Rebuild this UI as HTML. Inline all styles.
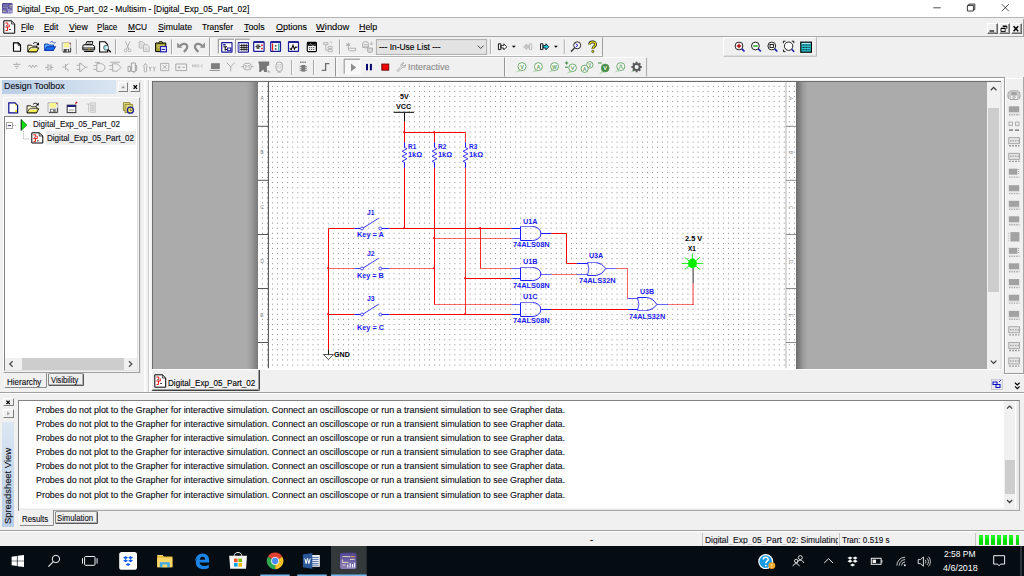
<!DOCTYPE html><html><head><meta charset="utf-8"><title>Multisim</title><style>
*{box-sizing:border-box;margin:0;padding:0}
html,body{width:1024px;height:576px;overflow:hidden;background:#f0f0f0;font-family:"Liberation Sans",sans-serif;}
#root{position:relative;width:1024px;height:576px;overflow:hidden;background:#f0f0f0;font-size:9.6px;color:#000}
.abs{position:absolute}
.t{position:absolute;white-space:nowrap;line-height:1;transform-origin:0 0;-webkit-text-stroke:0.12px currentColor}
.s{position:absolute;white-space:nowrap;line-height:1;transform-origin:0 0}
u{text-decoration:underline;text-underline-offset:1px;text-decoration-thickness:0.6px}
svg{position:absolute;overflow:visible}
</style></head><body><div id="root">
<div class="abs" style="left:0px;top:0px;width:1024px;height:17px;background:#fff;"></div>
<svg style="left:2.2px;top:2.8px;" width="11" height="11" viewBox="0 0 11 11"><defs><linearGradient id="apg" x1="0" y1="0" x2="0.3" y2="1"><stop offset="0" stop-color="#453f8c"/><stop offset="1" stop-color="#7a72b4"/></linearGradient></defs><rect x="0" y="0" width="10.600" height="10.600" rx="1.300" fill="url(#apg)"/><path d="M1 2h5.400M1 4.200h4.400v2.200h2.600M6 8.200h3.600" stroke="#9d97cc" stroke-width=".9" fill="none"/><path d="M7.600 2.400h2.400M7.600 4h2M0.800 8.200h3" stroke="#ecd9a8" stroke-width=".8"/><path d="M6.600 9.600v-2.200M8.200 9.600v-3M9.600 9.600v-2" stroke="#cfcbe8" stroke-width=".7"/></svg>
<div class="t" style="left:17.02px;top:4.27px;font-size:9.6px;color:#000;transform:scale(0.8780,1);">Digital_Exp_05_Part_02 - Multisim - [Digital_Exp_05_Part_02]</div>
<svg style="left:930px;top:0px;" width="94" height="17" viewBox="0 0 94 17"><path d="M3.3 7.8h7.4" stroke="#222" stroke-width="0.8"/><path d="M37.4 5.4h6v5.6h-6zM38.8 5.4v-1.3h6v5.6h-1.4" stroke="#222" stroke-width="0.9" fill="none"/><path d="M71.8 4.2l7 7M78.8 4.2l-7 7" stroke="#222" stroke-width="0.8"/></svg>
<div class="abs" style="left:0px;top:17px;width:1024px;height:1px;background:#b4b4b4;"></div>
<svg style="left:3px;top:20px;" width="13" height="14" viewBox="0 0 13 14"><path d="M0.8 0.8h7.6l3.3 3.2v9.2h-10.9z" fill="#fff" stroke="#000" stroke-width="1"/><path d="M8.4 0.8v3.2h3.3" fill="none" stroke="#000" stroke-width=".7"/><path d="M2.3 3h2.5v2.5M2.3 7h4V4.5M4.5 7v3.5h-2" stroke="#e00" stroke-width="0.9" fill="none"/><path d="M6 9.5h2M3 5.8h1.5" stroke="#000" stroke-width=".7"/></svg>
<div class="t" style="left:20.92px;top:21.87px;font-size:9.6px;color:#000;transform:scale(0.8339,1);"><u>F</u>ile</div>
<div class="t" style="left:44.02px;top:21.87px;font-size:9.6px;color:#000;transform:scale(0.8584,1);"><u>E</u>dit</div>
<div class="t" style="left:68.52px;top:21.87px;font-size:9.6px;color:#000;transform:scale(0.9111,1);"><u>V</u>iew</div>
<div class="t" style="left:97.32px;top:21.87px;font-size:9.6px;color:#000;transform:scale(0.8411,1);"><u>P</u>lace</div>
<div class="t" style="left:128.42px;top:21.87px;font-size:9.6px;color:#000;transform:scale(0.8690,1);"><u>M</u>CU</div>
<div class="t" style="left:158.02px;top:21.87px;font-size:9.6px;color:#000;transform:scale(0.9103,1);"><u>S</u>imulate</div>
<div class="t" style="left:202.42px;top:21.87px;font-size:9.6px;color:#000;transform:scale(0.8760,1);">Tra<u>n</u>sfer</div>
<div class="t" style="left:243.82px;top:21.87px;font-size:9.6px;color:#000;transform:scale(0.9192,1);"><u>T</u>ools</div>
<div class="t" style="left:275.62px;top:21.87px;font-size:9.6px;color:#000;transform:scale(0.9370,1);"><u>O</u>ptions</div>
<div class="t" style="left:316.42px;top:21.87px;font-size:9.6px;color:#000;transform:scale(0.9723,1);"><u>W</u>indow</div>
<div class="t" style="left:359.42px;top:21.87px;font-size:9.6px;color:#000;transform:scale(0.9268,1);"><u>H</u>elp</div>
<div class="abs" style="left:987px;top:23px;width:10.5px;height:10.8px;background:#f0f0f0;border-top:1px solid #fff;border-left:1px solid #fff;border-right:1px solid #696969;border-bottom:1px solid #696969;box-shadow:inset -1px -1px 0 #a0a0a0"></div>
<div class="abs" style="left:998.7px;top:23px;width:11px;height:10.8px;background:#f0f0f0;border-top:1px solid #fff;border-left:1px solid #fff;border-right:1px solid #696969;border-bottom:1px solid #696969;box-shadow:inset -1px -1px 0 #a0a0a0"></div>
<div class="abs" style="left:1010.7px;top:23px;width:11px;height:10.8px;background:#f0f0f0;border-top:1px solid #fff;border-left:1px solid #fff;border-right:1px solid #696969;border-bottom:1px solid #696969;box-shadow:inset -1px -1px 0 #a0a0a0"></div>
<svg style="left:987px;top:23px;" width="36" height="11" viewBox="0 0 36 11"><path d="M2.5 8h4.6" stroke="#000" stroke-width="1.2"/><path d="M15.8 3.2h4v2.6M14 5.2h4.2v3.3h-4.2z" stroke="#000" stroke-width="0.9" fill="none"/><path d="M14 5.5h4.2M15.8 3.4h4" stroke="#000" stroke-width="1.2"/><path d="M26.6 3.2l4.6 5M31.2 3.2l-4.6 5" stroke="#000" stroke-width="1.5"/></svg>
<div class="abs" style="left:1023px;top:19px;width:1px;height:17px;background:#a0a0a0;"></div>
<div class="abs" style="left:0px;top:36px;width:1024px;height:1px;background:#a8a8a8;"></div>
<div class="abs" style="left:0px;top:37px;width:209px;height:1px;background:#fff;"></div>
<div class="abs" style="left:0px;top:55.4px;width:603px;height:1px;background:#fbfbfb;"></div>
<div class="abs" style="left:0px;top:56.3px;width:603px;height:0.9px;background:#b4b4b4;"></div>
<div class="abs" style="left:0px;top:57.2px;width:647px;height:0.9px;background:#fbfbfb;"></div>
<div class="abs" style="left:0px;top:77px;width:1004.4px;height:1.2px;background:#9a9a9a;"></div>
<div class="abs" style="left:0px;top:78.2px;width:1004.4px;height:1.4px;background:#fff;"></div>
<svg style="left:0px;top:0px;" width="1024" height="80" viewBox="0 0 1024 80"><path d="M13.5 42.8h4.8l2.2 2.2v6.2h-7z" fill="#fff" stroke="#000" stroke-width="1.15"/><path d="M18.1 42.8v2.4h2.4" fill="none" stroke="#000" stroke-width=".8"/><path d="M27.8 45.2h3.600l0.900 1h4.600v5.600h-9.100z" fill="#fffbd0" stroke="#000" stroke-width=".9"/><path d="M27.900 51.800l2.200-3.900h8.800l-2.200 3.900z" fill="#f6ee40" stroke="#000" stroke-width=".9"/><path d="M29.400 50.600l1.400-2h6.200" stroke="#fff" stroke-width=".7" fill="none"/><path d="M33.2 43.6c1.3-1.4 3.2-1.5 4.4-0.2l0.9 1" stroke="#000" stroke-width=".9" fill="none"/><path d="M39 42.2v3h-3z" fill="#000"/><path d="M44.6 44h3.6l0.9 1h4.4v5.4h-8.9z" fill="#58a8ff" stroke="#0a3cb0" stroke-width=".9"/><path d="M44.7 50.4l2.3-3.7h8.6l-2.3 3.7z" fill="#1a6cf0" stroke="#0a2ca0" stroke-width=".9"/><path d="M50.2 42.6c0.9-1.4 2-1.4 2.8-0.3s1.7 1.2 2.6-0.1" stroke="#0a3cb0" stroke-width=".9" fill="none"/><path d="M62.200 42.800h8.400v9.200h-7.600l-0.800-0.800z" fill="#f0f0f0" stroke="#a0a0a0" stroke-width=".9"/><path d="M63 52h7.600v-4" stroke="#444" stroke-width="1" fill="none"/><rect x="63.8" y="42.9" width="5.2" height="4.4" fill="#f6f080"/><path d="M63.8 44.2h5.2M63.8 45.8h5.2" stroke="#fff" stroke-width=".5" stroke-dasharray="1 1"/><rect x="63.6" y="49" width="5.6" height="3" fill="#4a4a4a"/><rect x="66.6" y="49.6" width="1.4" height="2" fill="#e8e8e8"/><rect x="69.6" y="43" width="1" height="1.2" fill="#c02020"/><path d="M76.4 39.5V54" stroke="#a6a6a6" stroke-width="1"/><path d="M77.4 39.5V54" stroke="#fdfdfd" stroke-width="0.8"/><path d="M85.6 44.6l1.2-3h6l-0.9 3z" fill="#fff" stroke="#000" stroke-width=".9"/><path d="M87.3 43h3.8" stroke="#000" stroke-width=".6"/><path d="M83.6 44.8h9.2l1.8 1.6v3.4h-11.8v-3.6z" fill="#f4f4f4" stroke="#000" stroke-width="1"/><path d="M83 48h11.4" stroke="#000" stroke-width=".9"/><path d="M84.2 51.4h9.4" stroke="#000" stroke-width="1.2"/><rect x="88" y="48.6" width="2.4" height="0.9" fill="#b0a000"/><path d="M99.6 41.8h5.4l2.6 2.6v7.6h-8z" fill="#fff" stroke="#000" stroke-width="1.1"/><circle cx="106.1" cy="47.7" r="2.5" fill="#7fe8f8" stroke="#555" stroke-width=".9"/><circle cx="106.7" cy="47.9" r="1.3" fill="#e8e8e8"/><path d="M108 49.6l2.8 2.6" stroke="#000" stroke-width="1.3"/><path d="M115.5 39.5V54" stroke="#a6a6a6" stroke-width="1"/><path d="M116.5 39.5V54" stroke="#fdfdfd" stroke-width="0.8"/><path d="M125.4 41.4l3.4 7.6M130 41.4l-3.4 7.6" stroke="#a8a8a8" stroke-width=".9" fill="none"/><circle cx="125.6" cy="50.4" r="1.4" fill="none" stroke="#a8a8a8" stroke-width=".8"/><circle cx="129.6" cy="50.4" r="1.4" fill="none" stroke="#a8a8a8" stroke-width=".8"/><path d="M139.2 41.8h3.8l1.6 1.6v4.6h-5.4z" fill="#ececec" stroke="#b0b0b0" stroke-width=".9"/><path d="M143.6 44.8h3.8l1.8 1.8v4.8h-5.6z" fill="#ececec" stroke="#b0b0b0" stroke-width=".9"/><path d="M140.2 44h2.6M140.2 45.8h2.6M144.8 48h2.8M144.8 49.6h2.8" stroke="#b8b8b8" stroke-width=".6"/><path d="M155.6 43h10.2v8.6h-10.2z" fill="#a8a23a" stroke="#000" stroke-width="1"/><path d="M158.6 43.2l0.8-1.6h2.6l0.8 1.6z" fill="#d8d050" stroke="#000" stroke-width=".8"/><path d="M156.8 45.4h7.6M156.8 47.2h3" stroke="#d6d080" stroke-width=".7"/><rect x="160.6" y="46.6" width="5.8" height="5.2" fill="#fff" stroke="#1a1ab0" stroke-width="1.1"/><path d="M161.6 49.4h3.6" stroke="#1a1ab0" stroke-width="1.1"/><path d="M171.5 39.5V54" stroke="#a6a6a6" stroke-width="1"/><path d="M172.5 39.5V54" stroke="#fdfdfd" stroke-width="0.8"/><path d="M177.2 42.6v5.2h5.2z" fill="#8c8c8c"/><path d="M180 46c2.2-2.4 5-2.8 6.6-1.2 1.6 1.8 0.4 4.4-2.8 7" stroke="#8c8c8c" stroke-width="2.2" fill="none"/><path d="M205 42.6v5.2h-5.2z" fill="#8c8c8c"/><path d="M202.2 46c-2.2-2.4-5-2.8-6.6-1.2-1.6 1.8-0.4 4.4 2.8 7" stroke="#8c8c8c" stroke-width="2.2" fill="none"/><path d="M209.6 37.4V56" stroke="#9c9c9c" stroke-width="1"/><path d="M210.8 37.4V56" stroke="#fff" stroke-width="1"/><rect x="218.3" y="39.2" width="15.699999999999989" height="14.399999999999999" fill="#f9f9f9"/><path d="M218.3 53.6V39.2H234" stroke="#8e8e8e" stroke-width="1" fill="none"/><path d="M218.8 53.6H234V39.7" stroke="#fff" stroke-width="1" fill="none"/><rect x="235.4" y="39.2" width="14.5" height="14.399999999999999" fill="#f9f9f9"/><path d="M235.4 53.6V39.2H249.9" stroke="#8e8e8e" stroke-width="1" fill="none"/><path d="M235.9 53.6H249.9V39.7" stroke="#fff" stroke-width="1" fill="none"/><rect x="221.7" y="42.7" width="10.3" height="9.4" rx="0.3" fill="#fff" stroke="#1a1a96" stroke-width="1.2"/><rect x="223.2" y="44" width="2.4" height="1.5" fill="#1a1a96"/><path d="M223.4 46.8h3.6M225.2 46.8v3.8M225.2 49.6h2.4" stroke="#000" stroke-width="1" fill="none"/><rect x="227.6" y="48" width="3.2" height="2.6" fill="#fff" stroke="#1a1a96" stroke-width="1"/><rect x="238.3" y="42.7" width="10.1" height="9.4" rx="0.3" fill="#fff" stroke="#1a1a96" stroke-width="1.2"/><rect x="238.4" y="43.2" width="1.6" height="8.4" fill="#a8a8e0"/><path d="M239.8 45.6h8M239.8 47.6h8M239.8 49.6h8M241.8 44v6.6M244 44v6.6M246.2 44v6.6" stroke="#000" stroke-width=".8"/><rect x="253.7" y="42" width="10.4" height="9.3" rx="0.3" fill="#fff" stroke="#1a1a96" stroke-width="1.2"/><path d="M253.7 42h10.4" stroke="#1a1a96" stroke-width="1.8"/><path d="M255.4 46.6h1.6M259 46.6h1.6M257.2 44.4v4.6M258.8 44.4v4.6" stroke="#000" stroke-width=".9"/><rect x="261.2" y="44.6" width="1.6" height="1.4" fill="#e01010"/><rect x="261.2" y="47.8" width="1.6" height="1.4" fill="#e01010"/><rect x="270.7" y="42" width="9.8" height="9.3" rx="0.3" fill="#fff" stroke="#1a1a96" stroke-width="1.2"/><path d="M270.7 42h9.8" stroke="#1a1a96" stroke-width="1.8"/><path d="M272.6 43.4v7.4" stroke="#f01010" stroke-width="1.1"/><path d="M278.8 43.4v7.4" stroke="#10a0a0" stroke-width="1.1"/><rect x="275" y="45.2" width="1.4" height="1.4" fill="#000"/><rect x="275" y="48.2" width="1.4" height="1.4" fill="#000"/><path d="M273.6 45.9h4M273.6 48.9h4" stroke="#a0c8c8" stroke-width=".6"/><rect x="288.5" y="42" width="10" height="9.3" rx="0.3" fill="#fff" stroke="#1a1a96" stroke-width="1.2"/><path d="M288.5 42h10" stroke="#1a1a96" stroke-width="1.8"/><path d="M289.8 48.4l1.4 1.2 1.8-4.4 1.4 4 1.2-2.2 1.8 0.2" stroke="#000" stroke-width="1.1" fill="none"/><rect x="307.4" y="42.4" width="9" height="9.2" rx="0.8" fill="#f4f4f4" stroke="#000" stroke-width="1.2"/><rect x="308" y="42.8" width="7.8" height="3" fill="#000"/><path d="M309.4 44.6c0.8-1.2 1.6-1.2 2.4 0s1.6 1 2.4-0.2" stroke="#fff" stroke-width=".6" fill="none"/><path d="M309 47.6h6M309 49.4h6" stroke="#555" stroke-width="1" stroke-dasharray="1.2 0.8"/><path d="M306.8 44v7" stroke="#999" stroke-width=".8"/><path d="M323.6 42.6h4.4v2h-4.4zM325.8 44.6v5.6h2.4M328.2 46.4h4v2h-4zM328.2 49.4h4v2.4h-4z" stroke="#b4b4b4" stroke-width="1" fill="none"/><path d="M330.6 41.2l1.2 2.4" stroke="#b4b4b4" stroke-width=".9"/><path d="M339.5 39.5V54" stroke="#a6a6a6" stroke-width="1"/><path d="M340.5 39.5V54" stroke="#fdfdfd" stroke-width="0.8"/><path d="M346 43.6l4.4 2.4M350.4 43.6l-4.4 2.4M348.2 42.6v4.4" stroke="#a8a8a8" stroke-width=".9"/><path d="M348.4 47v3.2M348.4 48.2h7.2v2.6h-6.4" stroke="#a8a8a8" stroke-width=".9" fill="none"/><circle cx="365.6" cy="44.8" r="3.2" fill="none" stroke="#a8a8a8" stroke-width=".9"/><path d="M363.6 44.8h4.6M362 47h7" stroke="#a8a8a8" stroke-width=".9"/><path d="M367.6 48h4.8v3.4c0 1.4-4.8 1.4-4.8 0z" fill="#d8d8d8" stroke="#a8a8a8" stroke-width=".9"/><path d="M371.6 41.6v3.2M370.4 43.4l1.2 1.6 1.2-1.6" stroke="#a8a8a8" stroke-width=".8" fill="none"/><rect x="376.4" y="39.6" width="110.2" height="14.8" fill="#e3e3e3" stroke="#adadad" stroke-width="1"/><path d="M477.8 45.6l2.9 2.9 2.9-2.9" stroke="#444" stroke-width="1" fill="none"/><path d="M490.4 39.5V54" stroke="#a6a6a6" stroke-width="1"/><path d="M491.4 39.5V54" stroke="#fdfdfd" stroke-width="0.8"/><path d="M498.40000000000003 43.8h2.4v5.8h-2.4z" fill="none" stroke="#000" stroke-width=".9"/><path d="M501.2 45.6h2.6v-1.8l3 3-3 3v-1.8h-2.6z" fill="#fff" stroke="#000" stroke-width=".8"/><path d="M511.8 45.8h4l-2 2z" fill="#000"/><path d="M529.4 43.8h2.2v5.8h-2.2z" fill="none" stroke="#b8b8b8" stroke-width=".9"/><path d="M529 45.6h-2.4v-1.8l-3 3 3 3v-1.8h2.4z" fill="#c8c8c8" stroke="#b8b8b8" stroke-width=".8"/><path d="M540.5 43.8h2.4v5.8h-2.4z" fill="none" stroke="#000" stroke-width=".9"/><path d="M543.3 45.6h2.6v-1.8l3 3-3 3v-1.8h-2.6z" fill="#20d0e8" stroke="#000" stroke-width=".8"/><path d="M553.9 45.8h4l-2 2z" fill="#000"/><path d="M564.3 39.5V54" stroke="#a6a6a6" stroke-width="1"/><path d="M565.3 39.5V54" stroke="#fdfdfd" stroke-width="0.8"/><circle cx="577.2" cy="45.3" r="3.5" fill="#fff" stroke="#222" stroke-width="1"/><path d="M575.6 43.6l2.4 1.8-2.4 1.8" stroke="#1a1ad0" stroke-width="1" fill="none"/><path d="M574.6 48l-3.6 3.6" stroke="#444" stroke-width="1.5"/><path d="M589.6 44.6c0-3.6 6-3.6 6-0.2 0 2.2-2.8 2.2-2.8 4.6" stroke="#000" stroke-width="2.6" fill="none"/><path d="M589.6 44.6c0-3.6 6-3.6 6-0.2 0 2.2-2.8 2.2-2.8 4.6" stroke="#f4f000" stroke-width="1.3" fill="none"/><circle cx="592.8" cy="51.4" r="1.1" fill="#f4f000" stroke="#000" stroke-width=".6"/><path d="M602.5 37.4V56.4" stroke="#a0a0a0" stroke-width="1"/><path d="M723.6 56V37.5H816" stroke="#fff" stroke-width="1" fill="none"/><path d="M723.6 56.2H816.4V37.5" stroke="#b4b4b4" stroke-width="1" fill="none"/><circle cx="739" cy="46" r="3.9" fill="#fff" stroke="#222" stroke-width="1"/><path d="M736.8 46h4.4M739 43.8v4.4" stroke="#b00000" stroke-width="1.3"/><path d="M741.9 48.9l2.6 2.6" stroke="#1a1ab0" stroke-width="1.6"/><circle cx="755.4" cy="46" r="3.9" fill="#fff" stroke="#222" stroke-width="1"/><path d="M753.2 46h4.4" stroke="#00a000" stroke-width="1.3"/><path d="M758.3 48.9l2.6 2.6" stroke="#1a1ab0" stroke-width="1.6"/><circle cx="771.8" cy="46" r="3.9" fill="#fff" stroke="#222" stroke-width="1"/><rect x="770" y="44.4" width="3.4" height="3" fill="none" stroke="#000" stroke-width=".9"/><path d="M774.6999999999999 48.9l2.6 2.6" stroke="#1a1ab0" stroke-width="1.6"/><circle cx="788.6" cy="46.2" r="4.2" fill="#fff" stroke="#222" stroke-width="1"/><path d="M783.4 43.2v-2h2M793.8 43.2v-2h-2M783.4 49.6v2h2" stroke="#000" stroke-width=".9" fill="none"/><path d="M791.6 49.2l2.6 2.6" stroke="#1a1ab0" stroke-width="1.6"/><rect x="800.8" y="42.2" width="10.6" height="10" fill="#30c8d8" stroke="#000" stroke-width="1.2"/><path d="M802.4 45h7.4M802.4 47.4h7.4M802.4 49.8h7.4" stroke="#000" stroke-width=".8" stroke-dasharray="2.2 0.8"/><path d="M801.6 43.4h9" stroke="#fff" stroke-width=".7"/><path d="M13.2 64.4h7.2M14.6 66.4h4.4M16 68.3h1.6M16.8 62.4v2" stroke="#a4a4a4" stroke-width="0.85" fill="none"/><path d="M28.4 66.6l1.2-1.6 1.6 2.6 1.6-2.6 1.6 2.6 1.6-2.6 1.4 1.8" stroke="#a4a4a4" stroke-width="0.85" fill="none"/><path d="M45 67.4h3M51 67.4h2.6M48 64.2v6.4M51 64.2v6.4M48 64.4l3 3-3 3" stroke="#a4a4a4" stroke-width="0.85" fill="none"/><path d="M62.2 67h3.4M65.6 64v6M65.6 66l3.2-2.4M65.6 68l3.2 2.4M68 70.6v1" stroke="#a4a4a4" stroke-width="0.85" fill="none"/><path d="M76.6 65.2h3M76.6 69.4h3M79.6 63v8.6l6-4.3zM85.6 67.3h2M81 62.6v1.4M81 70.8v1.2" stroke="#a4a4a4" stroke-width="0.85" fill="none"/><path d="M93.4 65.6h3.4M93.4 69.4h3.4M96.8 63.6h3.6c2.8 0 4.6 2 4.6 3.9s-1.8 3.9-4.6 3.9h-3.600z M95 62.4h5" stroke="#a4a4a4" stroke-width="0.85" fill="none"/><path d="M109.2 65.6h3.4M109.2 69.4h3.4M112.6 63.8h4.4l4.2 3.7-4.2 3.700h-4.400zM110 62.2h10" stroke="#a4a4a4" stroke-width="0.85" fill="none"/><path d="M128 66.4h2.4v5h-2.4zM131.400 63h4v8.6h-4zM134 71.600v1.600M136.600 65v6" stroke="#a4a4a4" stroke-width="1.0" fill="none"/><path d="M143.4 66.4l2-3 2 3M144.200 66.400v4.600c0 1.200 2.400 1.200 2.400 0v-4.600M149 66.800l1.200 2 1.200-2M150.200 68.800v2.600M153 66.800l1.200 2 1.200-2M154.200 68.800v2.600" stroke="#a4a4a4" stroke-width="0.85" fill="none"/><path d="M160.6 63.400h8.2v7.200h-8.200zM162.600 65.200l4.200 3.600M166.800 65.200l-4.200 3.600" stroke="#a4a4a4" stroke-width="0.85" fill="none"/><path d="M175.800 64h10.800v6.600h-10.800zM178 67.300h2.400M179.200 66.100v2.400M182.400 67.300h2.400" stroke="#a4a4a4" stroke-width="0.95" fill="none"/><path d="M192.600 67.200v-2.600l1.200 1.600 1.200-1.600v2.600M196 64.600v2.600M199.200 65c-1.600-0.800-2 0.600-0.800 1s0.800 1.800-1 1M202.800 65c-1.800-1-2.800 2.800 0 1.800" stroke="#a4a4a4" stroke-width="0.6" fill="none"/><rect x="211" y="63.200" width="8.800" height="5.800" fill="#7e7e7e"/><path d="M209.600 70.400h10.200" stroke="#8a8a8a" stroke-width="1"/><path d="M230.700 71.400v-5.400M226.600 62.600l4.100 4 4.100-4" stroke="#a4a4a4" stroke-width="0.9" fill="none"/><path d="M241.200 66.600h2.400M251.200 66.600h2.400" stroke="#a4a4a4" stroke-width="0.85" fill="none"/><rect x="243.600" y="63.400" width="7.600" height="6.400" rx="2.400" fill="none" stroke="#a4a4a4" stroke-width=".85"/><path d="M245.600 68.400v-3.400l1.800 2 1.800-2v3.400" stroke="#a4a4a4" stroke-width="0.7" fill="none"/><path d="M258.200 61.600h11v3.600l-2.400 1v5.800h-2.600l-1 -2.400-2.600 2.400h-1.400v-7z" fill="#787878"/><path d="M266.400 69.200v3M268.200 70.400v2M269.800 71.400v1" stroke="#787878" stroke-width=".8"/><rect x="276" y="62" width="6.400" height="9.400" rx="3" fill="none" stroke="#a4a4a4" stroke-width=".9"/><path d="M278 64v5.400M280.200 64v5.400" stroke="#a4a4a4" stroke-width=".8" stroke-dasharray="1 .8"/><path d="M277.600 72.200h3.200" stroke="#a4a4a4" stroke-width=".8"/><path d="M291.6 60V75" stroke="#a6a6a6" stroke-width="1"/><path d="M292.6 60V75" stroke="#fdfdfd" stroke-width="0.8"/><path d="M300 62.200h6.600" stroke="#8a8a8a" stroke-width="1.400" stroke-dasharray="1.600 .6"/><rect x="301.400" y="65" width="3.800" height="6.600" fill="#7a7a7a"/><path d="M299.600 66.400h7.400M299.600 68.400h7.400M299.600 70.400h7.400" stroke="#7a7a7a" stroke-width=".9"/><path d="M313.5 60V75" stroke="#a6a6a6" stroke-width="1"/><path d="M314.5 60V75" stroke="#fdfdfd" stroke-width="0.8"/><path d="M321.800 70.400h3.800v-6.800h3.800" stroke="#6c6c6c" stroke-width="1.300" fill="none"/><path d="M335.600 57.600V76.400" stroke="#8c8c8c" stroke-width="1"/><path d="M336.800 57.600V76.400" stroke="#fff" stroke-width="1"/><rect x="344.200" y="59.200" width="15.800" height="14.600" fill="#f7f7f7"/><path d="M344.200 73.800V59.200H360" stroke="#8e8e8e" stroke-width="1" fill="none"/><path d="M344.800 73.800H360V59.800" stroke="#fff" stroke-width="1" fill="none"/><path d="M351 63.400l5.200 4-5.200 4z" fill="#8e8e8e"/><rect x="366" y="63.900" width="2" height="6.400" fill="#00006a"/><rect x="369.900" y="63.900" width="2" height="6.400" fill="#00006a"/><rect x="381.800" y="64" width="7" height="6.200" fill="#f40000" stroke="#500" stroke-width=".8"/><path d="M397 70.600l4.200-4.200c-0.800-2 0.600-3.800 2.600-3.600l-1.400 1.600 0.400 1.400 1.400 0.400 1.400-1.600c0.400 2-1.400 3.600-3.400 2.800l-4.200 4.200z" fill="#f8f8f8" stroke="#9a9a9a" stroke-width=".8"/><path d="M504.600 57.600V76.400" stroke="#8c8c8c" stroke-width="1"/><path d="M505.800 57.600V76.400" stroke="#fff" stroke-width="1"/><path d="M519.4 69.19999999999999l-4 3.400 5.600-1.400z" fill="#b9dab9"/><circle cx="522" cy="66.6" r="4.0" fill="#fff" stroke="#5f9e5f" stroke-width=".9"/><text x="522" y="68.6" font-size="5.6" font-weight="bold" font-family="Liberation Sans" text-anchor="middle" fill="#5f9e5f">V</text><path d="M535.8 69.19999999999999l-4 3.400 5.600-1.400z" fill="#b9dab9"/><circle cx="538.4" cy="66.6" r="4.0" fill="#fff" stroke="#5f9e5f" stroke-width=".9"/><text x="538.4" y="68.6" font-size="5.6" font-weight="bold" font-family="Liberation Sans" text-anchor="middle" fill="#5f9e5f">A</text><path d="M552.0 69.19999999999999l-4 3.400 5.600-1.400z" fill="#b9dab9"/><circle cx="554.6" cy="66.6" r="4.0" fill="#fff" stroke="#5f9e5f" stroke-width=".9"/><text x="554.6" y="68.6" font-size="5" font-weight="bold" font-family="Liberation Sans" text-anchor="middle" fill="#5f9e5f">W</text><path d="M570.0 70.39999999999999l-4 3.400 5.600-1.400z" fill="#b9dab9"/><circle cx="572.6" cy="67.8" r="3.8" fill="#fff" stroke="#5f9e5f" stroke-width=".9"/><text x="572.6" y="69.8" font-size="5.6" font-weight="bold" font-family="Liberation Sans" text-anchor="middle" fill="#5f9e5f">V</text><path d="M565 63h3.200M566.600 61.400v3.200M565 67.200h3.200" stroke="#3f8a3f" stroke-width="1"/><circle cx="589.800" cy="64.800" r="3.200" fill="#fff" stroke="#5f9e5f" stroke-width=".9"/><text x="589.800" y="66.600" font-size="4.600" font-weight="bold" font-family="Liberation Sans" text-anchor="middle" fill="#5f9e5f">V</text><circle cx="584.600" cy="68.800" r="3.600" fill="#fff" stroke="#5f9e5f" stroke-width=".9"/><text x="584.600" y="70.800" font-size="5" font-weight="bold" font-family="Liberation Sans" text-anchor="middle" fill="#5f9e5f">A</text><path d="M602.6 70.6l-4 3.400 5.600-1.400z" fill="#b9dab9"/><circle cx="605.2" cy="68" r="3.9" fill="#3f8a3f" stroke="#5f9e5f" stroke-width=".9"/><text x="605.2" y="70" font-size="5.6" font-weight="bold" font-family="Liberation Sans" text-anchor="middle" fill="#fff">V</text><path d="M598 63h3.600" stroke="#3f8a3f" stroke-width="1"/><path d="M618.1999999999999 69.19999999999999l-4 3.400 5.600-1.400z" fill="#b9dab9"/><circle cx="620.8" cy="66.6" r="4.0" fill="#fff" stroke="#5f9e5f" stroke-width=".9"/><path d="M618.400 68.200h1.600v-3.200h1.800v3.200h1.600" stroke="#5f9e5f" stroke-width=".8" fill="none"/><path d="M630 72.600l3-2.600 1.400 1.400z" fill="#b9dab9"/><path d="M640.00 67.00L641.80 67.00M639.00 69.40L640.28 70.68M636.60 70.40L636.60 72.20M634.20 69.40L632.92 70.68M633.20 67.00L631.40 67.00M634.20 64.60L632.92 63.32M636.60 63.60L636.60 61.80M639.00 64.60L640.28 63.32" stroke="#5a5a5a" stroke-width="2"/><circle cx="636.600" cy="67" r="3" fill="none" stroke="#5a5a5a" stroke-width="2"/><circle cx="636.600" cy="67" r="1.700" fill="#f0f0f0"/><path d="M646.600 57.600V76.400" stroke="#a8a8a8" stroke-width="1"/></svg>
<div class="t" style="left:379.22px;top:42.27px;font-size:9.6px;color:#000;transform:scale(0.8764,1);-webkit-text-stroke:0.15px #000;">--- In-Use List ---</div>
<div class="t" style="left:408.02px;top:61.97px;font-size:9.6px;color:#8a8a8a;transform:scale(0.9348,1);">Interactive</div>
<div class="abs" style="left:2px;top:80px;width:114px;height:13.5px;background:linear-gradient(to right,#b9cde5 0%,#c9d9eb 50%,#d9e5f1 100%);"></div>
<div class="t" style="left:4.32px;top:81.07px;font-size:9.6px;color:#0c0c14;transform:scale(0.9272,1);">Design Toolbox</div>
<div class="abs" style="left:118px;top:82px;width:10.2px;height:10px;background:#f0f0f0;border-top:1px solid #fff;border-left:1px solid #fff;border-right:1px solid #808080;border-bottom:1px solid #808080"></div>
<div class="abs" style="left:130.3px;top:82px;width:10px;height:10px;background:#f0f0f0;border-top:1px solid #fff;border-left:1px solid #fff;border-right:1px solid #808080;border-bottom:1px solid #808080"></div>
<svg style="left:118px;top:82px;" width="23" height="10" viewBox="0 0 23 10"><path d="M3.2 6.3l2-2.6 2 2.6z" fill="#9a9a9a"/><path d="M15.6 3.3l3.4 3.6M19 3.3l-3.4 3.6" stroke="#000" stroke-width="1.25"/></svg>
<div class="abs" style="left:3.4px;top:96.8px;width:136.4px;height:276.6px;border-left:1px solid #fff;border-top:1px solid #fff;border-right:1px solid #a0a0a0;border-bottom:1px solid #a0a0a0"></div>
<div class="abs" style="left:140.2px;top:80px;width:0.9px;height:294px;background:#e2e2e2;"></div>
<svg style="left:8px;top:102px;" width="128" height="12" viewBox="0 0 128 12"><path d="M0.8 0.8h6.2l2.6 2.600v7.400h-8.800z" fill="#fff" stroke="#0a0a8c" stroke-width="1.200"/><path d="M7.300 7.900h1.700v2.300h-1.700z" fill="#f0e000"/><path d="M7 1.400l2 2h-2z" fill="#f0e000"/><path d="M19 3.800h3.800l1 1h5v6h-9.800z" fill="#fffbd0" stroke="#111" stroke-width=".9"/><path d="M19.200 10.800l2.300-4h9.400l-2.500 4z" fill="#f6ee50" stroke="#111" stroke-width=".9"/><path d="M20.600 9.600l1.500-2.200h6.800" stroke="#fff" stroke-width=".7" fill="none"/><path d="M25 2.400c1.500-1.600 3.500-1.600 4.600 0.200" stroke="#000" stroke-width=".9" fill="none"/><path d="M30.600 0.600v3h-3z" fill="#000"/><path d="M40 0.800h9.800v10h-8.800l-1-1z" fill="#f0f0f0" stroke="#a8a8a8" stroke-width=".9"/><rect x="41.700" y="1.200" width="6.200" height="4.400" fill="#f8f27a"/><path d="M41.700 2.600h6.200M41.700 4.200h6.200" stroke="#fdfbd0" stroke-width=".6" stroke-dasharray="1 1"/><path d="M41 10.400h8.400M49.400 6v4.400" stroke="#444" stroke-width="1"/><rect x="42.600" y="7.200" width="4.600" height="2.800" fill="#fff" stroke="#555" stroke-width=".7"/><rect x="45.400" y="7.800" width="1.200" height="1.800" fill="#333"/><rect x="48.300" y="1" width="1" height="1.200" fill="#c03030"/><rect x="59.200" y="3.200" width="8.600" height="7.400" fill="#fff" stroke="#404048" stroke-width="1.100"/><rect x="59.200" y="3" width="8.600" height="2" fill="#20207a"/><path d="M67.400 1.600l1.800-1.600" stroke="#c01010" stroke-width="1.300"/><rect x="60.800" y="7.200" width="5.400" height="2" fill="#c4c4c4"/><path d="M78.500 2h5" stroke="#c6c6c6" stroke-width="1"/><path d="M80.600 2v8.200" stroke="#c6c6c6" stroke-width="1"/><rect x="82.400" y="0.800" width="5" height="9.600" fill="#dedede" stroke="#cacaca" stroke-width=".8"/><path d="M83.400 3.600h3M83.400 5.800h3M83.400 8h3" stroke="#c0c0c0" stroke-width=".9"/><path d="M115.400 0.600h6.600v7.800h-6.600z" fill="#e8e098" stroke="#8c8428" stroke-width=".9"/><path d="M117 2.400h7.600v8.200h-7.600z" fill="#ded678" stroke="#8c8428" stroke-width=".9"/><circle cx="122.400" cy="8.200" r="3" fill="#f8f040" stroke="#1a1aa0" stroke-width="1.300"/><path d="M122.400 6.600v1.800h1.400" stroke="#1a1aa0" stroke-width=".7" fill="none"/></svg>
<div class="abs" style="left:4.2px;top:116.2px;width:134px;height:254.6px;background:#fff;border-left:1px solid #828282;border-top:1px solid #828282;border-right:1px solid #e3e3e3;border-bottom:1px solid #e3e3e3"></div>
<svg style="left:5px;top:117px;" width="135" height="30" viewBox="0 0 135 30"><rect x="1.4" y="5.6" width="6" height="6" fill="#fff" stroke="#919191" stroke-width=".8"/><path d="M2.8 8.6h3.2" stroke="#1a1a60" stroke-width=".9"/><path d="M8.4 8.6h3.4" stroke="#888" stroke-width=".8" stroke-dasharray="0.9 0.9"/><path d="M16.4 2.8l5.4 5.2-5.4 5.2z" fill="#10e010" stroke="#0a8a0a" stroke-width=".9"/><path d="M16.2 2.4v11.2" stroke="#222" stroke-width=".9"/><path d="M18.6 14v8h6.6" stroke="#888" stroke-width=".8" stroke-dasharray="0.9 0.9" fill="none"/><rect x="40.8" y="14" width="90.2" height="13.6" fill="#ececec"/></svg>
<svg style="left:31.3px;top:132.2px;" width="13" height="12" viewBox="0 0 13 12"><path d="M0.8 0.8h7.4l3.6 3.2v7h-11z" fill="#fff" stroke="#000" stroke-width="1"/><path d="M8.2 0.8v3.2h3.6" fill="none" stroke="#000" stroke-width=".7"/><path d="M2.3 2.8h2.5v2.2M2.3 6.6h4V4.2M4.5 6.6v3h-2" stroke="#e00" stroke-width="0.9" fill="none"/><path d="M6 8.8h2M3 5.2h1.5" stroke="#000" stroke-width=".7"/></svg>
<div class="t" style="left:33.02px;top:119.37px;font-size:9.6px;color:#0c0c14;transform:scale(0.8402,1);">Digital_Exp_05_Part_02</div>
<div class="t" style="left:47.12px;top:132.57px;font-size:9.6px;color:#0c0c14;transform:scale(0.8402,1);">Digital_Exp_05_Part_02</div>
<div class="abs" style="left:5.4px;top:357.6px;width:132px;height:12px;background:#f0f0f0;"></div>
<div class="abs" style="left:21.9px;top:357.6px;width:102.3px;height:12px;background:#cdcdcd;"></div>
<svg style="left:5.4px;top:357.6px;" width="132" height="12" viewBox="0 0 132 12"><path d="M7.6 3.2l-2.8 2.8 2.8 2.8" stroke="#505050" stroke-width="1.3" fill="none"/><path d="M124 3.2l2.8 2.8-2.8 2.8" stroke="#505050" stroke-width="1.3" fill="none"/></svg>
<div class="abs" style="left:3.6px;top:372.6px;width:43.6px;height:15.4px;background:#f0f0f0;border-left:1px solid #fafafa;border-right:1px solid #8c8c8c;border-bottom:1.3px solid #8a8a8a;border-radius:0 0 1.5px 1.5px"></div>
<div class="abs" style="left:48px;top:373.4px;width:35.8px;height:12.8px;background:#f0f0f0;border-left:1px solid #868686;border-top:1px solid #969696;border-right:1px solid #5a5a5a;border-bottom:1px solid #5a5a5a;box-shadow:inset -1px -1px 0 #b0b0b0;border-radius:1.5px"></div>
<div class="t" style="left:7.22px;top:376.87px;font-size:9.6px;color:#0c0c14;transform:scale(0.8374,1);">Hierarchy</div>
<div class="t" style="left:51.02px;top:375.27px;font-size:9.6px;color:#0c0c14;transform:scale(0.7913,1);">Visibility</div>
<div class="abs" style="left:144.2px;top:80px;width:1.4px;height:312px;background:#fbfbfb;"></div>
<div class="abs" style="left:147.6px;top:80px;width:1.2px;height:312px;background:#cfcfcf;"></div>
<div class="abs" style="left:149.4px;top:80px;width:2px;height:312px;background:#fbfbfb;"></div>
<div class="abs" style="left:0px;top:392px;width:1024px;height:1px;background:#a0a0a0;"></div>
<div class="abs" style="left:0px;top:393px;width:1024px;height:1.4px;background:#fff;"></div>
<div class="abs" style="left:152px;top:80.7px;width:850px;height:288.6px;background:#6e6e6e;"></div>
<div class="abs" style="left:1001.4px;top:80.7px;width:1.2px;height:289.6px;background:#fff;"></div>
<div class="abs" style="left:152px;top:368.6px;width:850.6px;height:1.4px;background:#fff;"></div>
<div class="abs" style="left:153px;top:82px;width:834px;height:286.6px;background:#ababab;"></div>
<div class="abs" style="left:246px;top:82px;width:11.5px;height:286.5px;background:linear-gradient(to right,#ababab 0%,#a0a0a0 40%,#858585 80%,#7a7a7a 100%);"></div>
<div class="abs" style="left:796px;top:82px;width:12px;height:286.5px;background:linear-gradient(to right,#6c6c6c 0%,#7e7e7e 25%,#9c9c9c 60%,#ababab 100%);"></div>
<div class="abs" style="left:257.5px;top:82px;width:538.5px;height:286.5px;background:#fff;"></div>
<svg style="left:0px;top:0px;clip-path:inset(82px 228px 207.5px 257.5px)" width="1024" height="576" viewBox="0 0 1024 576"><g stroke="#5e5e5e" stroke-width="0.84" stroke-dasharray="0.84 4.2267" fill="none"><path d="M261.93 86.35H796" /><path d="M261.93 91.42H796" /><path d="M261.93 96.48H796" /><path d="M261.93 101.55H796" /><path d="M261.93 106.62H796" /><path d="M261.93 111.68H796" /><path d="M261.93 116.75H796" /><path d="M261.93 121.82H796" /><path d="M261.93 126.88H796" /><path d="M261.93 131.95H796" /><path d="M261.93 137.02H796" /><path d="M261.93 142.08H796" /><path d="M261.93 147.15H796" /><path d="M261.93 152.22H796" /><path d="M261.93 157.28H796" /><path d="M261.93 162.35H796" /><path d="M261.93 167.42H796" /><path d="M261.93 172.48H796" /><path d="M261.93 177.55H796" /><path d="M261.93 182.62H796" /><path d="M261.93 187.68H796" /><path d="M261.93 192.75H796" /><path d="M261.93 197.82H796" /><path d="M261.93 202.88H796" /><path d="M261.93 207.95H796" /><path d="M261.93 213.02H796" /><path d="M261.93 218.08H796" /><path d="M261.93 223.15H796" /><path d="M261.93 228.22H796" /><path d="M261.93 233.28H796" /><path d="M261.93 238.35H796" /><path d="M261.93 243.42H796" /><path d="M261.93 248.48H796" /><path d="M261.93 253.55H796" /><path d="M261.93 258.62H796" /><path d="M261.93 263.68H796" /><path d="M261.93 268.75H796" /><path d="M261.93 273.82H796" /><path d="M261.93 278.88H796" /><path d="M261.93 283.95H796" /><path d="M261.93 289.02H796" /><path d="M261.93 294.08H796" /><path d="M261.93 299.15H796" /><path d="M261.93 304.22H796" /><path d="M261.93 309.28H796" /><path d="M261.93 314.35H796" /><path d="M261.93 319.42H796" /><path d="M261.93 324.48H796" /><path d="M261.93 329.55H796" /><path d="M261.93 334.62H796" /><path d="M261.93 339.69H796" /><path d="M261.93 344.75H796" /><path d="M261.93 349.82H796" /><path d="M261.93 354.89H796" /><path d="M261.93 359.95H796" /><path d="M261.93 365.02H796" /></g><path d="M268.4 82V368.5" stroke="#555" stroke-width="1.1"/><path d="M786 82V368.5" stroke="#c4c4c4" stroke-width="1.3"/><path d="M257.5 126.3H268.4" stroke="#555" stroke-width="1"/><path d="M786 126.3H796" stroke="#8c8c8c" stroke-width="1"/><path d="M257.5 180.3H268.4" stroke="#555" stroke-width="1"/><path d="M786 180.3H796" stroke="#8c8c8c" stroke-width="1"/><path d="M257.5 234.5H268.4" stroke="#555" stroke-width="1"/><path d="M786 234.5H796" stroke="#8c8c8c" stroke-width="1"/><path d="M257.5 288.5H268.4" stroke="#555" stroke-width="1"/><path d="M786 288.5H796" stroke="#8c8c8c" stroke-width="1"/><path d="M257.5 342.5H268.4" stroke="#555" stroke-width="1"/><path d="M786 342.5H796" stroke="#8c8c8c" stroke-width="1"/><path d="M393.70 112.40 L414.00 112.40" stroke="#333" stroke-width="1.25" fill="none"/><path d="M404.50 112.50 L404.50 121.40" stroke="#111" stroke-width="1" fill="none"/><path d="M404.50 121.40 L404.50 142.50" stroke="#ff0000" stroke-width="1.0" fill="none"/><path d="M404.50 132.50 L465.50 132.50" stroke="#ff0000" stroke-width="1.0" fill="none"/><path d="M465.50 132.50 L465.50 142.50" stroke="#ff0000" stroke-width="1.0" fill="none" stroke-opacity="0.78"/><path d="M434.50 132.50 L434.50 142.50" stroke="#ff0000" stroke-width="1.0" fill="none"/><circle cx="404.15" cy="132.15" r="1.05" fill="#ff0000"/><circle cx="434.15" cy="132.15" r="1.05" fill="#ff0000"/><path d="M404.50 142.50 L404.50 147.50" stroke="#1a1aff" stroke-width="1" fill="none"/><path d="M404.50 147.50 L406.90 148.75 L402.10 151.25 L406.90 153.75 L402.10 156.25 L406.90 158.75 L402.10 161.25 L404.50 162.50" stroke="#1a1aff" stroke-width="0.85" fill="none"/><path d="M404.50 162.50 L404.50 167.90" stroke="#1a1aff" stroke-width="1" fill="none"/><path d="M434.50 142.50 L434.50 147.50" stroke="#1a1aff" stroke-width="1" fill="none"/><path d="M434.50 147.50 L436.90 148.75 L432.10 151.25 L436.90 153.75 L432.10 156.25 L436.90 158.75 L432.10 161.25 L434.50 162.50" stroke="#1a1aff" stroke-width="0.85" fill="none"/><path d="M434.50 162.50 L434.50 167.90" stroke="#1a1aff" stroke-width="1" fill="none"/><path d="M465.50 142.50 L465.50 147.50" stroke="#1a1aff" stroke-width="1" fill="none"/><path d="M465.50 147.50 L467.90 148.75 L463.10 151.25 L467.90 153.75 L463.10 156.25 L467.90 158.75 L463.10 161.25 L465.50 162.50" stroke="#1a1aff" stroke-width="0.85" fill="none"/><path d="M465.50 162.50 L465.50 167.90" stroke="#1a1aff" stroke-width="1" fill="none"/><path d="M404.50 167.90 L404.50 228.50" stroke="#ff0000" stroke-width="1.0" fill="none"/><path d="M434.50 167.90 L434.50 304.50" stroke="#ff0000" stroke-width="1.0" fill="none"/><path d="M434.50 304.50 L511.50 304.50" stroke="#ff0000" stroke-width="1.0" fill="none" stroke-opacity="0.58"/><path d="M465.50 167.90 L465.50 314.50" stroke="#ff0000" stroke-width="1.0" fill="none" stroke-opacity="0.78"/><path d="M328.50 228.50 L328.50 349.50" stroke="#ff0000" stroke-width="1.0" fill="none"/><path d="M328.50 349.50 L328.50 354.50" stroke="#111" stroke-width="1" fill="none"/><path d="M323.50 354.50 L333.30 354.50 L328.50 359.60 L323.50 354.50" stroke="#222" stroke-width="0.75" fill="none"/><path d="M328.50 228.50 L354.50 228.50" stroke="#ff0000" stroke-width="1.0" fill="none"/><path d="M354.50 228.50 L360.60 228.50" stroke="#1a1aff" stroke-width="1" fill="none"/><path d="M381.70 228.50 L389.50 228.50" stroke="#1a1aff" stroke-width="1" fill="none"/><circle cx="362" cy="228.50" r="1.45" fill="#fff" stroke="#1a1aff" stroke-width="0.75"/><circle cx="380.3" cy="228.50" r="1.45" fill="#fff" stroke="#1a1aff" stroke-width="0.75"/><path d="M363.20 228.00 L378.70 218.20" stroke="#1a1aff" stroke-width="0.85" fill="none"/><path d="M328.50 268.50 L354.50 268.50" stroke="#ff0000" stroke-width="1.0" fill="none" stroke-opacity="0.58"/><path d="M354.50 268.50 L360.60 268.50" stroke="#1a1aff" stroke-width="1" fill="none" stroke-opacity="0.8"/><path d="M381.70 268.50 L389.50 268.50" stroke="#1a1aff" stroke-width="1" fill="none" stroke-opacity="0.8"/><circle cx="362" cy="268.50" r="1.45" fill="#fff" stroke="#1a1aff" stroke-width="0.75"/><circle cx="380.3" cy="268.50" r="1.45" fill="#fff" stroke="#1a1aff" stroke-width="0.75"/><path d="M363.20 268.00 L378.70 258.20" stroke="#1a1aff" stroke-width="0.85" fill="none"/><path d="M328.50 314.50 L354.50 314.50" stroke="#ff0000" stroke-width="1.0" fill="none"/><path d="M354.50 314.50 L360.60 314.50" stroke="#1a1aff" stroke-width="1" fill="none"/><path d="M381.70 314.50 L389.50 314.50" stroke="#1a1aff" stroke-width="1" fill="none"/><circle cx="362" cy="314.50" r="1.45" fill="#fff" stroke="#1a1aff" stroke-width="0.75"/><circle cx="380.3" cy="314.50" r="1.45" fill="#fff" stroke="#1a1aff" stroke-width="0.75"/><path d="M363.20 314.00 L378.70 304.20" stroke="#1a1aff" stroke-width="0.85" fill="none"/><path d="M389.50 228.50 L511.50 228.50" stroke="#ff0000" stroke-width="1.0" fill="none"/><circle cx="404.15" cy="228.15" r="1.05" fill="#ff0000"/><circle cx="480.15" cy="228.15" r="1.05" fill="#ff0000"/><path d="M389.50 268.50 L434.50 268.50" stroke="#ff0000" stroke-width="1.0" fill="none" stroke-opacity="0.58"/><circle cx="328.15" cy="268.15" r="1.05" fill="#ff0000"/><circle cx="434.15" cy="268.15" r="1.05" fill="#ff0000"/><path d="M389.50 314.50 L511.50 314.50" stroke="#ff0000" stroke-width="1.0" fill="none"/><circle cx="328.15" cy="314.15" r="1.05" fill="#ff0000"/><circle cx="465.15" cy="314.15" r="1.05" fill="#ff0000"/><path d="M434.50 238.50 L511.50 238.50" stroke="#ff0000" stroke-width="1.0" fill="none" stroke-opacity="0.58"/><circle cx="434.15" cy="238.15" r="1.05" fill="#ff0000"/><path d="M480.50 228.50 L480.50 268.50" stroke="#ff0000" stroke-width="1.0" fill="none" stroke-opacity="0.85"/><path d="M480.50 268.50 L511.50 268.50" stroke="#ff0000" stroke-width="1.0" fill="none" stroke-opacity="0.58"/><path d="M465.50 278.50 L511.50 278.50" stroke="#ff0000" stroke-width="1.0" fill="none"/><circle cx="465.15" cy="278.15" r="1.05" fill="#ff0000"/><path d="M511.50 228.50 L520.50 228.50" stroke="#1a1aff" stroke-width="1" fill="none"/><path d="M511.50 238.50 L520.50 238.50" stroke="#1a1aff" stroke-width="1" fill="none" stroke-opacity="0.65"/><path d="M520.50 240.50 L520.50 226.50" stroke="#1a1aff" stroke-width="1" fill="none"/><path d="M520.50 226.50 L532.60 226.50" stroke="#1a1aff" stroke-width="1" fill="none" stroke-opacity="0.6"/><path d="M520.50 240.50 L532.60 240.50" stroke="#1a1aff" stroke-width="1" fill="none"/><path d="M532.6 226.5A8.30 7.00 0 0 1 532.6 240.5" fill="none" stroke="#1a1aff" stroke-width="0.95"/><path d="M540.90 233.50 L551.50 233.50" stroke="#1a1aff" stroke-width="1" fill="none"/><path d="M511.50 268.50 L520.50 268.50" stroke="#1a1aff" stroke-width="1" fill="none" stroke-opacity="0.65"/><path d="M511.50 278.50 L520.50 278.50" stroke="#1a1aff" stroke-width="1" fill="none"/><path d="M520.50 280.50 L520.50 267.50" stroke="#1a1aff" stroke-width="1" fill="none"/><path d="M520.50 267.50 L532.60 267.50" stroke="#1a1aff" stroke-width="1" fill="none" stroke-opacity="0.6"/><path d="M520.50 280.50 L532.60 280.50" stroke="#1a1aff" stroke-width="1" fill="none"/><path d="M532.6 267.5A8.30 6.50 0 0 1 532.6 280.5" fill="none" stroke="#1a1aff" stroke-width="0.95"/><path d="M540.90 274.50 L551.50 274.50" stroke="#1a1aff" stroke-width="1" fill="none" stroke-opacity="0.65"/><path d="M511.50 304.50 L520.50 304.50" stroke="#1a1aff" stroke-width="1" fill="none" stroke-opacity="0.65"/><path d="M511.50 314.50 L520.50 314.50" stroke="#1a1aff" stroke-width="1" fill="none"/><path d="M520.50 316.50 L520.50 302.50" stroke="#1a1aff" stroke-width="1" fill="none"/><path d="M520.50 302.50 L532.60 302.50" stroke="#1a1aff" stroke-width="1" fill="none" stroke-opacity="0.6"/><path d="M520.50 316.50 L532.60 316.50" stroke="#1a1aff" stroke-width="1" fill="none"/><path d="M532.6 302.5A8.30 7.00 0 0 1 532.6 316.5" fill="none" stroke="#1a1aff" stroke-width="0.95"/><path d="M540.90 309.50 L551.50 309.50" stroke="#1a1aff" stroke-width="1" fill="none"/><path d="M576.50 263.50 L588.10 263.50" stroke="#1a1aff" stroke-width="1" fill="none"/><path d="M576.50 274.50 L588.10 274.50" stroke="#1a1aff" stroke-width="1" fill="none" stroke-opacity="0.65"/><path d="M587.50 262.50 L596.50 262.50" stroke="#1a1aff" stroke-width="1" fill="none" stroke-opacity="0.6"/><path d="M587.50 275.50 L596.50 275.50" stroke="#1a1aff" stroke-width="1" fill="none" stroke-opacity="0.9"/><path d="M596.5 262.5Q601.90 263.10 605.90 268.50Q601.90 274.90 596.5 275.5" fill="none" stroke="#1a1aff" stroke-width="0.95"/><path d="M587.5 262.5Q590.30 268.50 587.5 275.5" fill="none" stroke="#1a1aff" stroke-width="0.95" stroke-opacity="0.85"/><path d="M605.90 268.50 L616.50 268.50" stroke="#1a1aff" stroke-width="1" fill="none" stroke-opacity="0.65"/><path d="M627.50 298.50 L638.10 298.50" stroke="#1a1aff" stroke-width="1" fill="none" stroke-opacity="0.75"/><path d="M627.50 309.50 L638.10 309.50" stroke="#1a1aff" stroke-width="1" fill="none"/><path d="M637.50 297.50 L646.50 297.50" stroke="#1a1aff" stroke-width="1" fill="none"/><path d="M637.50 310.50 L646.50 310.50" stroke="#1a1aff" stroke-width="1" fill="none" stroke-opacity="0.6"/><path d="M646.5 297.5Q652.90 298.10 656.90 304.50Q652.90 309.90 646.5 310.5" fill="none" stroke="#1a1aff" stroke-width="0.95"/><path d="M637.5 297.5Q640.30 304.50 637.5 310.5" fill="none" stroke="#1a1aff" stroke-width="0.95" stroke-opacity="0.85"/><path d="M656.90 304.50 L668.50 304.50" stroke="#1a1aff" stroke-width="1" fill="none" stroke-opacity="0.65"/><path d="M551.50 233.50 L566.50 233.50 L566.50 263.50 L576.50 263.50" stroke="#ff0000" stroke-width="1.0" fill="none"/><path d="M551.50 274.50 L576.50 274.50" stroke="#ff0000" stroke-width="1.0" fill="none" stroke-opacity="0.58"/><path d="M551.50 309.50 L627.50 309.50" stroke="#ff0000" stroke-width="1.0" fill="none"/><path d="M616.50 268.50 L627.50 268.50 L627.50 298.50" stroke="#ff0000" stroke-width="1.0" fill="none" stroke-opacity="0.58"/><path d="M668.50 304.50 L693.90 304.50" stroke="#ff0000" stroke-width="1.0" fill="none" stroke-opacity="0.55"/><path d="M693.10 305.00 L693.10 283.20" stroke="#ff0000" stroke-width="1.8" fill="none" stroke-opacity="0.42"/><path d="M693.20 283.20 L693.20 263.50" stroke="#808080" stroke-width="1.7" fill="none"/><path d="M692.30 263.40L702.90 263.40M692.30 263.40L681.70 263.40M692.30 263.40L692.30 253.80M692.30 263.40L699.86 257.49M692.30 263.40L684.74 257.49M692.30 263.40L699.86 269.31M692.30 263.40L684.74 269.31" stroke="#00f000" stroke-width="0.9" fill="none"/><ellipse cx="692.45" cy="263.40" rx="4.4" ry="4.9" fill="#00f000"/></svg>
<div class="s" style="left:399.70px;top:93.73px;font-size:6.7px;color:#000;font-weight:bold;transform:scale(1.0494,1);">5V</div>
<div class="s" style="left:396.40px;top:104.23px;font-size:6.7px;color:#000;font-weight:bold;transform:scale(1.0815,1);">VCC</div>
<div class="s" style="left:408.00px;top:143.73px;font-size:6.7px;color:#1a1af0;font-weight:bold;transform:scale(0.9691,1);">R1</div>
<div class="s" style="left:407.60px;top:152.03px;font-size:6.7px;color:#1a1af0;font-weight:bold;transform:scale(1.1072,1);">1kΩ</div>
<div class="s" style="left:438.00px;top:143.73px;font-size:6.7px;color:#1a1af0;font-weight:bold;transform:scale(0.9691,1);">R2</div>
<div class="s" style="left:437.60px;top:152.03px;font-size:6.7px;color:#1a1af0;font-weight:bold;transform:scale(1.1072,1);">1kΩ</div>
<div class="s" style="left:469.00px;top:143.73px;font-size:6.7px;color:#1a1af0;font-weight:bold;transform:scale(0.9691,1);">R3</div>
<div class="s" style="left:468.60px;top:152.03px;font-size:6.7px;color:#1a1af0;font-weight:bold;transform:scale(1.1072,1);">1kΩ</div>
<div class="s" style="left:366.90px;top:210.03px;font-size:6.7px;color:#1a1af0;font-weight:bold;transform:scale(0.9929,1);">J1</div>
<div class="s" style="left:357.10px;top:231.93px;font-size:6.7px;color:#1a1af0;font-weight:bold;transform:scale(1.0972,1);">Key = A</div>
<div class="s" style="left:366.90px;top:250.73px;font-size:6.7px;color:#1a1af0;font-weight:bold;transform:scale(1.0198,1);">J2</div>
<div class="s" style="left:357.10px;top:272.53px;font-size:6.7px;color:#1a1af0;font-weight:bold;transform:scale(1.0862,1);">Key = B</div>
<div class="s" style="left:366.80px;top:296.33px;font-size:6.7px;color:#1a1af0;font-weight:bold;transform:scale(1.0332,1);">J3</div>
<div class="s" style="left:357.20px;top:324.53px;font-size:6.7px;color:#1a1af0;font-weight:bold;transform:scale(1.0943,1);">Key = C</div>
<div class="s" style="left:523.30px;top:218.53px;font-size:6.7px;color:#1a1af0;font-weight:bold;transform:scale(1.0893,1);">U1A</div>
<div class="s" style="left:512.90px;top:242.23px;font-size:6.7px;color:#1a1af0;font-weight:bold;transform:scale(1.1073,1);">74ALS08N</div>
<div class="s" style="left:523.30px;top:258.63px;font-size:6.7px;color:#1a1af0;font-weight:bold;transform:scale(1.0893,1);">U1B</div>
<div class="s" style="left:512.90px;top:282.53px;font-size:6.7px;color:#1a1af0;font-weight:bold;transform:scale(1.1073,1);">74ALS08N</div>
<div class="s" style="left:523.30px;top:294.43px;font-size:6.7px;color:#1a1af0;font-weight:bold;transform:scale(1.0893,1);">U1C</div>
<div class="s" style="left:512.90px;top:317.83px;font-size:6.7px;color:#1a1af0;font-weight:bold;transform:scale(1.1073,1);">74ALS08N</div>
<div class="s" style="left:589.40px;top:253.33px;font-size:6.7px;color:#1a1af0;font-weight:bold;transform:scale(1.0594,1);">U3A</div>
<div class="s" style="left:578.80px;top:278.23px;font-size:6.7px;color:#1a1af0;font-weight:bold;transform:scale(1.1103,1);">74ALS32N</div>
<div class="s" style="left:640.10px;top:289.13px;font-size:6.7px;color:#1a1af0;font-weight:bold;transform:scale(1.0594,1);">U3B</div>
<div class="s" style="left:629.30px;top:313.63px;font-size:6.7px;color:#1a1af0;font-weight:bold;transform:scale(1.0952,1);">74ALS32N</div>
<div class="s" style="left:685.30px;top:235.73px;font-size:6.7px;color:#000;font-weight:bold;transform:scale(1.1058,1);">2.5 V</div>
<div class="s" style="left:688.10px;top:245.73px;font-size:6.7px;color:#000;font-weight:bold;transform:scale(0.9517,1);">X1</div>
<div class="s" style="left:334.30px;top:352.13px;font-size:6.7px;color:#000;font-weight:bold;transform:scale(1.0612,1);">GND</div>
<div class="s" style="left:260.3px;top:96.39999999999999px;font-size:5.2px;color:#8a8a8a;">A</div>
<div class="s" style="left:789.2px;top:96.39999999999999px;font-size:5.2px;color:#8a8a8a;transform-origin:50% 50%;transform:rotate(90deg)">A</div>
<div class="s" style="left:260.3px;top:150.4px;font-size:5.2px;color:#8a8a8a;">B</div>
<div class="s" style="left:789.2px;top:150.4px;font-size:5.2px;color:#8a8a8a;transform-origin:50% 50%;transform:rotate(90deg)">B</div>
<div class="s" style="left:260.3px;top:204.5px;font-size:5.2px;color:#8a8a8a;">C</div>
<div class="s" style="left:789.2px;top:204.5px;font-size:5.2px;color:#8a8a8a;transform-origin:50% 50%;transform:rotate(90deg)">C</div>
<div class="s" style="left:260.3px;top:258.5px;font-size:5.2px;color:#8a8a8a;">D</div>
<div class="s" style="left:789.2px;top:258.5px;font-size:5.2px;color:#8a8a8a;transform-origin:50% 50%;transform:rotate(90deg)">D</div>
<div class="s" style="left:260.3px;top:312.5px;font-size:5.2px;color:#8a8a8a;">E</div>
<div class="s" style="left:789.2px;top:312.5px;font-size:5.2px;color:#8a8a8a;transform-origin:50% 50%;transform:rotate(90deg)">E</div>
<div class="abs" style="left:987px;top:82px;width:13.2px;height:286.5px;background:#f0f0f0;"></div>
<div class="abs" style="left:988px;top:107.8px;width:11.2px;height:184.7px;background:#cdcdcd;"></div>
<svg style="left:987px;top:82px;" width="13" height="287" viewBox="0 0 13 287"><path d="M3.8 8.2l2.8-2.8 2.8 2.8" stroke="#404040" stroke-width="1.3" fill="none"/><path d="M3.8 278.6l2.8 2.8 2.8-2.8" stroke="#404040" stroke-width="1.3" fill="none"/></svg>
<div class="abs" style="left:1000.2px;top:82px;width:1.4px;height:286.5px;background:#e3e3e3;"></div>
<div class="abs" style="left:150.5px;top:370px;width:109px;height:21px;background:#f0f0f0;border-left:1px solid #fff;border-right:1px solid #404040;border-bottom:1px solid #404040;border-radius:0 0 2px 2px;box-shadow:inset -1px -1px 0 #a0a0a0"></div>
<svg style="left:153.5px;top:374px;" width="13" height="14" viewBox="0 0 13 14"><path d="M0.8 0.8h7.6l3.3 3.2v9.2h-10.9z" fill="#fff" stroke="#000" stroke-width="1"/><path d="M8.4 0.8v3.2h3.3" fill="none" stroke="#000" stroke-width=".7"/><path d="M2.3 3h2.5v2.5M2.3 7h4V4.5M4.5 7v3.5h-2" stroke="#e00" stroke-width="0.9" fill="none"/><path d="M6 9.5h2M3 5.8h1.5" stroke="#000" stroke-width=".7"/></svg>
<div class="t" style="left:168.42px;top:377.97px;font-size:9.6px;color:#000;transform:scale(0.8441,1);">Digital_Exp_05_Part_02</div>
<svg style="left:990.5px;top:378.5px;" width="12" height="11" viewBox="0 0 12 11"><rect x="0.3" y="0.3" width="11" height="10" fill="#e8e8f4" stroke="#aaa" stroke-width=".5"/><path d="M2 3h4v2.5h-4zM5 5.5h4v3h-4z" fill="none" stroke="#1010c0" stroke-width="1.1"/><path d="M8 3l2-2" stroke="#1010c0" stroke-width=".8"/></svg>
<svg style="left:1013.5px;top:382px;" width="7" height="9" viewBox="0 0 7 9"><path d="M1 0.8l2.3 2.2 2.3-2.2M1 4.4l2.3 2.2 2.3-2.2" stroke="#000" stroke-width="1.2" fill="none"/></svg>
<div class="abs" style="left:1004.3px;top:77.2px;width:1px;height:296px;background:#9c9c9c;"></div>
<div class="abs" style="left:1005.3px;top:77.8px;width:18px;height:1px;background:#fdfdfd;"></div>
<div class="abs" style="left:1005.3px;top:78px;width:1px;height:295px;background:#fdfdfd;"></div>
<div class="abs" style="left:1023px;top:77.2px;width:1px;height:296px;background:#a8a8a8;"></div>
<div class="abs" style="left:1004.3px;top:372.6px;width:19.7px;height:1px;background:#9c9c9c;"></div>
<div class="abs" style="left:1004.3px;top:373.6px;width:19.7px;height:1px;background:#fdfdfd;"></div>
<svg style="left:1008px;top:82px;" width="13" height="290" viewBox="0 0 13 290"><path d="M2 8.899999999999997h8v8.600h-8z" stroke="#9a9a9a" stroke-width=".9" fill="none"/><path d="M0.6 9.899999999999997c-0.800 2.400-0.800 4.400 0 6.800M11.400 9.899999999999997c0.800 2.400 0.800 4.400 0 6.800" stroke="#9a9a9a" stroke-width="1" fill="none"/><rect x="3.200" y="9.899999999999997" width="5.600" height="3.600" fill="#a4a4a4"/><circle cx="6" cy="15.299999999999997" r="1.200" fill="none" stroke="#9a9a9a" stroke-width=".8"/><rect x="0.8" y="24.3" width="10.4" height="6" fill="#a2a2a2"/><path d="M1 32.7h10.5" stroke="#aaa" stroke-width="1.4" stroke-dasharray="1.4 1"/><path d="M0.8 31h10.6" stroke="#d0d0d0" stroke-width=".6"/><path d="M1 40.099999999999994h3.5v3.5h-3.5zM7.5 40.099999999999994h3.5v3.5h-3.5z" stroke="#9a9a9a" stroke-width=".8" fill="none"/><path d="M1 48.099999999999994h4M7 48.099999999999994h4" stroke="#8e8e8e" stroke-width="1.6"/><rect x="0.8" y="55.69999999999999" width="10.6" height="6" fill="#e4e4e4" stroke="#999" stroke-width=".8"/><path d="M2 58.69999999999999h9" stroke="#aaa" stroke-width="1.5" stroke-dasharray="1.5 1"/><path d="M1 63.79999999999999h10.5" stroke="#9a9a9a" stroke-width="1.4" stroke-dasharray="2 1"/><rect x="0.8" y="71.30000000000001" width="10.6" height="6" fill="#e4e4e4" stroke="#999" stroke-width=".8"/><path d="M2 74.30000000000001h9" stroke="#aaa" stroke-width="1.5" stroke-dasharray="1.5 1"/><path d="M1 79.4h10.5" stroke="#9a9a9a" stroke-width="1.4" stroke-dasharray="2 1"/><rect x="0.800" y="86.7" width="8.600" height="6" fill="#a2a2a2"/><path d="M10.600 87.0v6" stroke="#aaa" stroke-width="1.200" stroke-dasharray="1 1"/><path d="M1 95.10000000000001h10.500" stroke="#aaa" stroke-width="1.400" stroke-dasharray="1.400 1"/><rect x="0.8" y="103.2" width="10.4" height="6" fill="#a2a2a2"/><path d="M1 111.60000000000001h10.5" stroke="#aaa" stroke-width="1.4" stroke-dasharray="1.4 1"/><path d="M0.8 109.9h10.6" stroke="#d0d0d0" stroke-width=".6"/><rect x="0.8" y="118.8" width="10.4" height="6" fill="#a2a2a2"/><path d="M1 127.2h10.5" stroke="#aaa" stroke-width="1.4" stroke-dasharray="1.4 1"/><path d="M0.8 125.5h10.6" stroke="#d0d0d0" stroke-width=".6"/><rect x="0.8" y="134.3" width="10.4" height="6" fill="#a2a2a2"/><path d="M1 142.7h10.5" stroke="#aaa" stroke-width="1.4" stroke-dasharray="1.4 1"/><path d="M0.8 141h10.6" stroke="#d0d0d0" stroke-width=".6"/><rect x="2.400" y="150.1" width="9" height="9.400" fill="#a2a2a2"/><path d="M0.800 150.9v8" stroke="#aaa" stroke-width="1" stroke-dasharray="1 1.400"/><rect x="0.800" y="165.8" width="8.600" height="6" fill="#a2a2a2"/><path d="M10.600 166.1v6" stroke="#aaa" stroke-width="1.200" stroke-dasharray="1 1"/><path d="M1 174.2h10.500" stroke="#aaa" stroke-width="1.400" stroke-dasharray="1.400 1"/><rect x="0.8" y="181.3" width="10.4" height="6" fill="#a2a2a2"/><path d="M1 189.7h10.5" stroke="#aaa" stroke-width="1.4" stroke-dasharray="1.4 1"/><path d="M0.8 188h10.6" stroke="#d0d0d0" stroke-width=".6"/><rect x="0.8" y="197.05" width="10.4" height="6" fill="#a2a2a2"/><path d="M1 205.45h10.5" stroke="#aaa" stroke-width="1.4" stroke-dasharray="1.4 1"/><path d="M0.8 203.75h10.6" stroke="#d0d0d0" stroke-width=".6"/><rect x="0.8" y="212.7" width="10.4" height="6" fill="#a2a2a2"/><path d="M1 221.09999999999997h10.5" stroke="#aaa" stroke-width="1.4" stroke-dasharray="1.4 1"/><path d="M0.8 219.39999999999998h10.6" stroke="#d0d0d0" stroke-width=".6"/><rect x="0.8" y="228.90000000000003" width="10.4" height="6" fill="#a2a2a2"/><path d="M1 237.3h10.5" stroke="#aaa" stroke-width="1.4" stroke-dasharray="1.4 1"/><path d="M0.8 235.60000000000002h10.6" stroke="#d0d0d0" stroke-width=".6"/><rect x="0.8" y="244.75" width="10.6" height="6" fill="#e4e4e4" stroke="#999" stroke-width=".8"/><path d="M2 247.75h9" stroke="#aaa" stroke-width="1.5" stroke-dasharray="1.5 1"/><path d="M1 252.85h10.5" stroke="#9a9a9a" stroke-width="1.4" stroke-dasharray="2 1"/><rect x="0.8" y="260.4" width="10.6" height="6" fill="#e4e4e4" stroke="#999" stroke-width=".8"/><path d="M2 263.4h9" stroke="#aaa" stroke-width="1.5" stroke-dasharray="1.5 1"/><path d="M1 268.5h10.5" stroke="#9a9a9a" stroke-width="1.4" stroke-dasharray="2 1"/><rect x="0.8" y="276.0" width="10.6" height="6" fill="#e4e4e4" stroke="#999" stroke-width=".8"/><path d="M2 279.0h9" stroke="#aaa" stroke-width="1.5" stroke-dasharray="1.5 1"/><path d="M1 284.1h10.5" stroke="#9a9a9a" stroke-width="1.4" stroke-dasharray="2 1"/></svg>
<div class="abs" style="left:3.4px;top:397.6px;width:10.4px;height:8.6px;background:#f0f0f0;border-top:1px solid #fff;border-left:1px solid #fff;border-right:1px solid #808080;border-bottom:1px solid #808080"></div>
<svg style="left:3.4px;top:397.6px;" width="11" height="9" viewBox="0 0 11 9"><path d="M3.4 2.6l3.4 3.4M6.8 2.6l-3.4 3.4" stroke="#000" stroke-width="1.25"/></svg>
<div class="abs" style="left:3.4px;top:409.2px;width:10.4px;height:8.8px;background:#f0f0f0;border-top:1px solid #fff;border-left:1px solid #fff;border-right:1px solid #808080;border-bottom:1px solid #808080"></div>
<svg style="left:3.4px;top:409.2px;" width="11" height="9" viewBox="0 0 11 9"><path d="M4.2 2.6l2.6 1.9-2.6 1.9z" fill="#a0a0a0"/></svg>
<div class="abs" style="left:2.2px;top:422px;width:12.2px;height:104.5px;background:linear-gradient(to top,#b9cde5 0%,#c9d9eb 50%,#dbe6f2 100%);"></div>
<div class="t" style="left:3.2px;top:524.4px;font-size:9.6px;color:#0c0c14;transform-origin:0 0;transform:rotate(-90deg) scale(0.9776,1)">Spreadsheet View</div>
<div class="abs" style="left:18.4px;top:399.6px;width:1001.4px;height:111px;background:#fff;border-left:1px solid #828282;border-top:1px solid #828282;border-right:1.2px solid #a8a8a8;border-bottom:1.2px solid #a8a8a8;box-shadow:inset -2.6px -1.4px 0 #e8e8e8"></div>
<div class="t" style="left:36.32px;top:404.57px;font-size:9.6px;color:#0c0c14;transform:scale(0.9289,1);">Probes do not plot to the Grapher for interactive simulation. Connect an oscilloscope or run a transient simulation to see Grapher data.</div>
<div class="t" style="left:36.32px;top:418.75px;font-size:9.6px;color:#0c0c14;transform:scale(0.9289,1);">Probes do not plot to the Grapher for interactive simulation. Connect an oscilloscope or run a transient simulation to see Grapher data.</div>
<div class="t" style="left:36.32px;top:432.93px;font-size:9.6px;color:#0c0c14;transform:scale(0.9289,1);">Probes do not plot to the Grapher for interactive simulation. Connect an oscilloscope or run a transient simulation to see Grapher data.</div>
<div class="t" style="left:36.32px;top:447.11px;font-size:9.6px;color:#0c0c14;transform:scale(0.9289,1);">Probes do not plot to the Grapher for interactive simulation. Connect an oscilloscope or run a transient simulation to see Grapher data.</div>
<div class="t" style="left:36.32px;top:461.29px;font-size:9.6px;color:#0c0c14;transform:scale(0.9289,1);">Probes do not plot to the Grapher for interactive simulation. Connect an oscilloscope or run a transient simulation to see Grapher data.</div>
<div class="t" style="left:36.32px;top:475.47px;font-size:9.6px;color:#0c0c14;transform:scale(0.9289,1);">Probes do not plot to the Grapher for interactive simulation. Connect an oscilloscope or run a transient simulation to see Grapher data.</div>
<div class="t" style="left:36.32px;top:489.65px;font-size:9.6px;color:#0c0c14;transform:scale(0.9289,1);">Probes do not plot to the Grapher for interactive simulation. Connect an oscilloscope or run a transient simulation to see Grapher data.</div>
<div class="abs" style="left:1004.2px;top:401px;width:11.2px;height:107.6px;background:#f0f0f0;"></div>
<div class="abs" style="left:1004.8px;top:459.6px;width:10px;height:34.2px;background:#cdcdcd;"></div>
<svg style="left:1004.2px;top:401px;" width="11.2" height="108" viewBox="0 0 11.2 108"><path d="M3 7.6l2.6-2.6 2.6 2.6" stroke="#404040" stroke-width="1.3" fill="none"/><path d="M3 99l2.6 2.6 2.6-2.6" stroke="#404040" stroke-width="1.3" fill="none"/></svg>
<div class="abs" style="left:18.6px;top:510px;width:35.8px;height:16.2px;background:#f0f0f0;border-left:1px solid #fafafa;border-right:1px solid #8c8c8c;border-bottom:1.3px solid #8a8a8a;border-radius:0 0 1.5px 1.5px"></div>
<div class="abs" style="left:55px;top:511px;width:43px;height:13.4px;background:#f0f0f0;border-left:1px solid #868686;border-top:1px solid #969696;border-right:1px solid #5a5a5a;border-bottom:1px solid #5a5a5a;box-shadow:inset -1px -1px 0 #b0b0b0;border-radius:1.5px"></div>
<div class="t" style="left:22.22px;top:514.17px;font-size:9.6px;color:#0c0c14;transform:scale(0.8153,1);">Results</div>
<div class="t" style="left:57.22px;top:512.67px;font-size:9.6px;color:#0c0c14;transform:scale(0.8054,1);">Simulation</div>
<div class="abs" style="left:0px;top:530.4px;width:1024px;height:1px;background:#a0a0a0;"></div>
<div class="abs" style="left:0px;top:531.4px;width:1024px;height:1px;background:#fff;"></div>
<div class="t" style="left:590.02px;top:534.77px;font-size:9.6px;color:#000;transform:scale(1.0000,1);">-</div>
<div class="abs" style="left:702px;top:533px;width:0.9px;height:13px;background:#c4c4c4;"></div>
<div class="abs" style="left:703px;top:532px;width:135.6px;height:14px;overflow:hidden"></div>
<div class="t" style="left:704.62px;top:534.77px;font-size:9.6px;color:#0c0c14;transform:scale(0.8783,1);clip-path:inset(0 1.4% 0 0);">Digital_Exp_05_Part_02: Simulating</div>
<div class="abs" style="left:838.6px;top:533px;width:0.9px;height:13px;background:#c4c4c4;"></div>
<div class="t" style="left:841.82px;top:534.77px;font-size:9.6px;color:#0c0c14;transform:scale(0.8451,1);">Tran: 0.519 s</div>
<div class="abs" style="left:975px;top:533px;width:0.9px;height:13px;background:#c4c4c4;"></div>
<div class="abs" style="left:979.2px;top:535.4px;width:3.8px;height:9.6px;background:linear-gradient(to bottom,#30ff30,#00e000 60%,#10d010);"></div>
<div class="abs" style="left:985.25px;top:535.4px;width:3.8px;height:9.6px;background:linear-gradient(to bottom,#30ff30,#00e000 60%,#10d010);"></div>
<div class="abs" style="left:991.3000000000001px;top:535.4px;width:3.8px;height:9.6px;background:linear-gradient(to bottom,#30ff30,#00e000 60%,#10d010);"></div>
<div class="abs" style="left:997.35px;top:535.4px;width:3.8px;height:9.6px;background:linear-gradient(to bottom,#30ff30,#00e000 60%,#10d010);"></div>
<div class="abs" style="left:1003.4000000000001px;top:535.4px;width:3.8px;height:9.6px;background:linear-gradient(to bottom,#30ff30,#00e000 60%,#10d010);"></div>
<div class="abs" style="left:1009.45px;top:535.4px;width:3.8px;height:9.6px;background:linear-gradient(to bottom,#30ff30,#00e000 60%,#10d010);"></div>
<div class="abs" style="left:1015.5px;top:535.4px;width:3.8px;height:9.6px;background:linear-gradient(to bottom,#30ff30,#00e000 60%,#10d010);"></div>
<div class="abs" style="left:0px;top:545.8px;width:1024px;height:30.2px;background:#050d12;"></div>
<svg style="left:0px;top:0px;" width="1024" height="576" viewBox="0 0 1024 576"><path d="M11.6 556.700l5.300-0.750v4.700h-5.300zM17.600 555.850l6.400-0.950v5.750h-6.400zM11.600 561.350h5.300v4.700l-5.300-0.750zM17.600 561.350h6.400v5.750l-6.400-0.950z" fill="#fff"/><circle cx="55.900" cy="559" r="3.700" fill="none" stroke="#f4f4f4" stroke-width="1"/><path d="M53.300 561.700l-4.900 4.900" stroke="#f4f4f4" stroke-width="1.100"/><rect x="84.600" y="556.500" width="10.400" height="8.800" rx="1" fill="none" stroke="#f0f0f0" stroke-width="1"/><path d="M82.500 558.200v5.400M97.100 558.200v5.400" stroke="#f0f0f0" stroke-width="1"/><rect x="119.200" y="552" width="17.800" height="17.800" rx="2.600" fill="#fff"/><path d="M125.60 556.10l2.50 1.55l-2.50 1.55l-2.50 -1.55zM130.60 556.10l2.50 1.55l-2.50 1.55l-2.50 -1.55zM125.60 559.20l2.50 1.55l-2.50 1.55l-2.50 -1.55zM130.60 559.20l2.50 1.55l-2.50 1.55l-2.50 -1.55zM128.10 562.95l2.50 1.55l-2.50 1.55l-2.50 -1.55z" fill="#1460f0"/><path d="M157.200 555h5.400l1.200 1.400h8.600v10.800h-15.200z" fill="#e8b838"/><path d="M157.200 557.600h15.200v9.600h-15.200z" fill="#fad868"/><path d="M159.800 562.200h10v5h-10z" fill="#40a8e8"/><path d="M162.400 564.400h4.800v2.800h-4.800z" fill="#fad868"/><path d="M157.200 555h5.400l0.600 0.800h-6z" fill="#f8e090"/><path d="M195 561.600c0.400-4.800 3.600-8 7.600-8 4.200 0 6.600 3 6.600 7.200v1.800h-9.600c0.200 2.200 2 3.400 4.400 3.400 1.800 0 3.400-0.400 4.800-1.200v3.200c-1.600 0.800-3.400 1.200-5.600 1.200-4.600 0-7.400-2.800-7.400-6.600 0-2.600 1.400-4.800 3.600-6-1.800 1-3.200 2.800-4.400 5zM199.800 559.800h5.400c0-1.800-1-3-2.600-3s-2.600 1.200-2.800 3z" fill="#1c84e4"/><path d="M234.200 555.800c0-4.400 7.600-4.400 7.600 0" stroke="#f4f4f4" stroke-width="1" fill="none"/><path d="M229.200 555.700h17.800l-1 13h-15.800z" fill="#f6f6f6"/><rect x="234" y="558.600" width="3.600" height="3.600" fill="#f25022"/><rect x="238.400" y="558.600" width="3.600" height="3.600" fill="#7fba00"/><rect x="234" y="563" width="3.600" height="3.600" fill="#00a4ef"/><rect x="238.400" y="563" width="3.600" height="3.600" fill="#ffb900"/><path d="M275.1 560.9L267.91 556.75A8.3 8.3 0 0 1 282.29 556.75Z" fill="#e34133"/><path d="M275.1 560.9L282.29 556.75A8.3 8.3 0 0 1 275.10 569.20Z" fill="#f6c026"/><path d="M275.1 560.9L275.10 569.20A8.3 8.3 0 0 1 267.91 556.75Z" fill="#2ea852"/><circle cx="275.1" cy="560.9" r="3.900" fill="#f4f4f4"/><circle cx="275.1" cy="560.9" r="3.100" fill="#4a8af4"/><rect x="309" y="555" width="10.800" height="11.800" fill="#f4f4f4"/><path d="M311 557.400h7.600M311 559.400h7.600M311 561.400h7.600M311 563.400h7.600M311 565.200h7.600" stroke="#2b579a" stroke-width=".8"/><path d="M302.900 554.600l9.400-1.600v15.800l-9.400-1.600z" fill="#2b579a"/><path d="M304.800 558.400l1.300 5.200 1.400-5.200 1.400 5.200 1.300-5.200" stroke="#fff" stroke-width="1" fill="none"/><rect x="331" y="546" width="35.700" height="30" fill="#33383b"/><defs><linearGradient id="msg" x1="0" y1="0" x2="0" y2="1"><stop offset="0" stop-color="#4f4593"/><stop offset="1" stop-color="#8d7fb8"/></linearGradient></defs><rect x="340" y="552.800" width="16.400" height="16.200" rx="2" fill="url(#msg)"/><path d="M342.400 556.600h8M350 559.400h4.600M342.400 559.400v3h6M342.400 565h3.200" stroke="#e0d4b8" stroke-width="1" fill="none"/><path d="M347.800 567.600v-3M350.200 567.600v-4.600M352.600 567.600v-3.600M354.600 567.600v-5" stroke="#fff" stroke-width="1"/><path d="M351 556.600h3.600" stroke="#e8a040" stroke-width="1"/><rect x="260.3" y="574.500" width="29.399999999999977" height="1.600" fill="#76b9ed"/><rect x="297.2" y="574.500" width="29.600000000000023" height="1.600" fill="#76b9ed"/><rect x="331" y="574.500" width="35.69999999999999" height="1.600" fill="#76b9ed"/><circle cx="765.700" cy="561.600" r="7.500" fill="#fff"/><circle cx="765.700" cy="561.600" r="6.300" fill="#1a9ae0"/><path d="M763.300 559.600c0-3.200 4.900-3.200 4.900-0.200 0 1.800-2.400 1.800-2.400 3.800" stroke="#fff" stroke-width="1.500" fill="none"/><circle cx="765.800" cy="565.600" r="0.950" fill="#fff"/><circle cx="771.900" cy="565.600" r="3.400" fill="#f5a623"/><path d="M771.900 563.900v2.200M771.900 566.800v0.900" stroke="#fff" stroke-width=".8"/><circle cx="800.300" cy="557.600" r="2" fill="none" stroke="#f0f0f0" stroke-width=".9"/><path d="M797 563c0.400-3.600 6.200-3.600 6.600 0" stroke="#f0f0f0" stroke-width=".9" fill="none"/><circle cx="796.200" cy="561" r="1.700" fill="none" stroke="#f0f0f0" stroke-width=".9"/><path d="M793 566.200c0.400-3.400 5.800-3.400 6.200 0" stroke="#f0f0f0" stroke-width=".9" fill="none"/><path d="M824.200 563l4.400-4.300 4.400 4.300" stroke="#f0f0f0" stroke-width="1" fill="none"/><path d="M850.05 556.44l2.55 1.58l-2.55 1.58l-2.55 -1.58zM855.15 556.44l2.55 1.58l-2.55 1.58l-2.55 -1.58zM850.05 559.60l2.55 1.58l-2.55 1.58l-2.55 -1.58zM855.15 559.60l2.55 1.58l-2.55 1.58l-2.55 -1.58zM852.60 563.43l2.55 1.58l-2.55 1.58l-2.55 -1.58z" fill="#f4f4f4"/><rect x="871.300" y="558.300" width="9.800" height="6" fill="none" stroke="#f0f0f0" stroke-width="1"/><rect x="872.600" y="559.600" width="3.400" height="3.400" fill="#f0f0f0"/><path d="M881.900 560.200v2.400" stroke="#f0f0f0" stroke-width="1"/><circle cx="904.800" cy="565.200" r="1" fill="#f0f0f0"/><path d="M901.600 565.600a3.600 3.600 0 0 1 3.600-3.600M899.200 565.600a6 6 0 0 1 6-6M896.800 565.600a8.400 8.400 0 0 1 8.400-8.400" stroke="#d8d8d8" stroke-width=".9" fill="none"/><path d="M918.200 559.600h2.200l3-2.600v9.200l-3-2.600h-2.200z" fill="none" stroke="#f0f0f0" stroke-width=".9"/><path d="M925.200 559.800a2.600 2.600 0 0 1 0 3.600M926.900 558.200a5 5 0 0 1 0 6.800M928.600 556.800a7.200 7.200 0 0 1 0 9.600" stroke="#f0f0f0" stroke-width=".8" fill="none"/><path d="M993.700 555.700h10.900v8.400h-4l-1.500 1.700-1.500-1.700h-3.900z" fill="none" stroke="#f0f0f0" stroke-width="1"/><path d="M1021 546v30" stroke="#5a5a5a" stroke-width="1"/></svg>
<div class="t" style="left:943.92px;top:549.07px;font-size:9.6px;color:#fff;transform:scale(0.8811,1);-webkit-text-stroke:0;">2:58 PM</div>
<div class="t" style="left:942.52px;top:563.07px;font-size:9.6px;color:#fff;transform:scale(0.9312,1);-webkit-text-stroke:0;">4/6/2018</div>
</div></body></html>
